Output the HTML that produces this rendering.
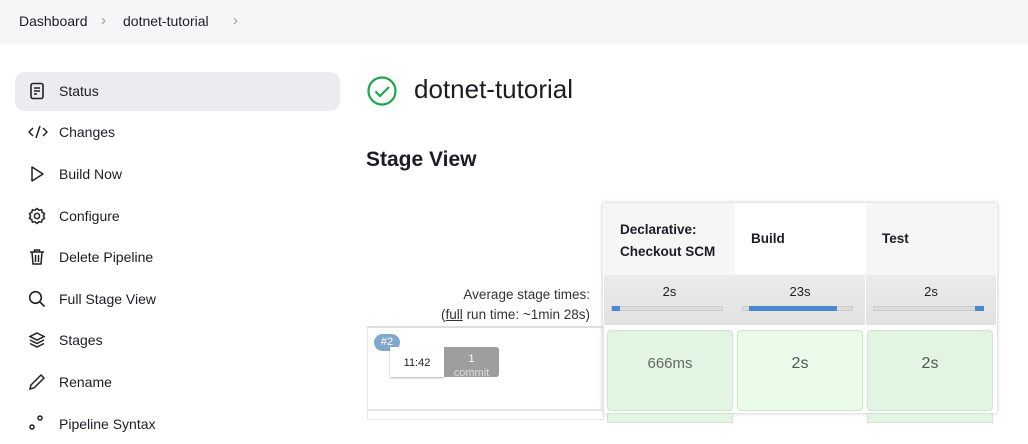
<!DOCTYPE html>
<html><head><style>
*{box-sizing:border-box;margin:0;padding:0}
body{width:1028px;height:420px;overflow:hidden;background:#fff;font-family:"Liberation Sans",sans-serif;color:#1c1c24;position:relative}
.top{position:absolute;left:0;top:0;width:1028px;height:45px;background:#f6f6f8}
.bc{position:absolute;top:13px;font-size:14px;color:#1c1c24}
.sep{position:absolute;top:12px;font-size:15px;color:#999}
.nav{position:absolute;left:15px;width:325px;height:39px;border-radius:10px;font-size:14px}
.nav svg{position:absolute;left:13px;top:10px}
.nav span{position:absolute;left:44px;top:11px}
.abs{position:absolute}
.hc{position:absolute;top:203px;height:72px;font-weight:bold;font-size:13.5px;padding:16px 0 0 16px;line-height:22px}
.av{position:absolute;top:275px;height:50px;background:linear-gradient(#ebebeb,#e2e2e2);text-align:center;font-size:13px;padding-top:9px}
.bar{position:absolute;top:31px;left:7px;right:12px;height:5px;background:#ddd;border:1px solid #ccc}
.cell{position:absolute;top:330px;height:81px;border:1px solid #cfe5cf;border-radius:4px;background:#e2f5e2;text-align:center;line-height:66px;font-size:16px;color:#555}
</style></head><body>
<div class="top"></div>
<div class="bc" style="left:19px">Dashboard</div>
<div class="sep" style="left:101px">›</div>
<div class="bc" style="left:123px">dotnet-tutorial</div>
<div class="sep" style="left:233px">›</div>

<div class="nav" style="top:72px;background:#ececf0">
<svg width="18" height="18" viewBox="0 0 18 18" fill="none" stroke="#222" stroke-width="1.6"><rect x="3" y="1.5" width="12" height="15" rx="2"/><path d="M6 6h6M6 9h6M6 12h3"/></svg><span>Status</span></div>
<div class="nav" style="top:113px"><svg width="20" height="18" viewBox="0 0 20 18" fill="none" stroke="#222" stroke-width="1.5"><path d="M5 5L1 9l4 4M15 5l4 4-4 4M12 3L8 15"/></svg><span>Changes</span></div>
<div class="nav" style="top:155px"><svg width="18" height="18" viewBox="0 0 18 18" fill="none" stroke="#222" stroke-width="1.5"><path d="M4 2l11 7-11 7z" stroke-linejoin="round"/></svg><span>Build Now</span></div>
<div class="nav" style="top:197px"><svg width="18" height="18" viewBox="0 0 18 18" fill="none" stroke="#222" stroke-width="1.5"><circle cx="9" cy="9" r="2.6"/><path d="M9 1.5l2 1.7 2.6-.4.6 2.5 2.3 1.4-1.1 2.3 1.1 2.3-2.3 1.4-.6 2.5-2.6-.4L9 16.5l-2-1.7-2.6.4-.6-2.5-2.3-1.4L2.6 9 1.5 6.7l2.3-1.4.6-2.5 2.6.4z"/></svg><span>Configure</span></div>
<div class="nav" style="top:238px"><svg width="18" height="18" viewBox="0 0 18 18" fill="none" stroke="#222" stroke-width="1.5"><path d="M2 4h14M6.5 4V2h5v2M4 4l1 12h8l1-12M7.5 7v7M10.5 7v7"/></svg><span>Delete Pipeline</span></div>
<div class="nav" style="top:280px"><svg width="18" height="18" viewBox="0 0 18 18" fill="none" stroke="#222" stroke-width="1.6"><circle cx="7.5" cy="7.5" r="5.8"/><path d="M11.8 11.8l4.7 4.7"/></svg><span>Full Stage View</span></div>
<div class="nav" style="top:321px"><svg width="18" height="18" viewBox="0 0 18 18" fill="none" stroke="#222" stroke-width="1.5"><path d="M9 2l7 3.5-7 3.5-7-3.5zM2 9l7 3.5 7-3.5M2 12.5l7 3.5 7-3.5"/></svg><span>Stages</span></div>
<div class="nav" style="top:363px"><svg width="18" height="18" viewBox="0 0 18 18" fill="none" stroke="#222" stroke-width="1.5"><path d="M2 16l1-4L13 2l3 3L6 15z"/></svg><span>Rename</span></div>
<div class="nav" style="top:405px"><svg width="18" height="18" viewBox="0 0 18 18" fill="none" stroke="#222" stroke-width="1.5"><circle cx="4" cy="12" r="2"/><circle cx="12" cy="3" r="2"/></svg><span>Pipeline Syntax</span></div>

<svg class="abs" style="left:366px;top:75px" width="32" height="32" viewBox="0 0 32 32" fill="none" stroke="#1ea64b" stroke-width="2.2"><circle cx="16" cy="16" r="13.5"/><path d="M9.5 16.5l4.5 4.5 9-9"/></svg>
<div class="abs" style="left:414px;top:74px;font-size:26px">dotnet-tutorial</div>
<div class="abs" style="left:366px;top:148px;font-size:21px;font-weight:bold">Stage View</div>

<div class="abs" style="left:603px;top:203px;width:394px;height:210px;box-shadow:0 0 4px rgba(0,0,0,.25)"></div>
<div class="hc" style="left:604px;width:131px;background:#f6f6f6">Declarative:<br>Checkout SCM</div>
<div class="hc" style="left:735px;width:130px;background:#fff;padding-top:25px">Build</div>
<div class="hc" style="left:866px;width:130px;background:#f6f6f6;padding-top:25px">Test</div>
<div class="av" style="left:604px;width:131px">2s<div class="bar"><div class="abs" style="left:0;top:-1px;width:8px;height:5px;background:#4a88d0"></div></div></div>
<div class="av" style="left:735px;width:130px">23s<div class="bar"><div class="abs" style="left:6px;top:-1px;width:88px;height:5px;background:#4a88d0"></div></div></div>
<div class="av" style="left:866px;width:130px">2s<div class="bar"><div class="abs" style="right:-1px;top:-1px;width:9px;height:5px;background:#4a88d0"></div></div></div>

<div class="abs" style="left:380px;top:285px;width:210px;text-align:right;font-size:13.5px;line-height:20px;color:#333">Average stage times:<br>(<u>full</u> run time: ~1min 28s)</div>
<div class="abs" style="left:367px;top:326px;width:237px;height:2px;background:#ddd"></div>
<div class="abs" style="left:367px;top:328px;width:237px;height:82px;border:1px solid #e6e6e6;border-top:none"></div>
<div class="abs" style="left:367px;top:410px;width:237px;height:10px;border:1px solid #e6e6e6"></div>
<div class="abs" style="left:374px;top:334px;width:26px;height:17px;border-radius:9px;background:#7fa8cf;color:#fff;font-size:11px;text-align:center;line-height:17px">#2</div>
<div class="abs" style="left:390px;top:347px;width:54px;height:30px;background:#fff;box-shadow:0 1px 2px rgba(0,0,0,.3);font-size:11px;text-align:center;line-height:32px">11:42</div>
<div class="abs" style="left:444px;top:347px;width:55px;height:30px;background:#9e9e9e;border-radius:0 3px 3px 0;color:#fff;font-size:11px;text-align:center;line-height:14px;padding-top:5px;overflow:hidden">1<br><span style="color:#ddd">commit</span></div>

<div class="cell" style="left:607px;width:126px;font-size:15px;color:#666">666ms</div>
<div class="cell" style="left:737px;width:126px;background:#ebfbe9">2s</div>
<div class="cell" style="left:867px;width:126px">2s</div>
<div class="abs" style="left:607px;top:413px;width:126px;height:10px;background:#e2f5e2;border:1px solid #cfe5cf"></div>
<div class="abs" style="left:867px;top:413px;width:126px;height:10px;background:#e2f5e2;border:1px solid #cfe5cf"></div>
</body></html>
